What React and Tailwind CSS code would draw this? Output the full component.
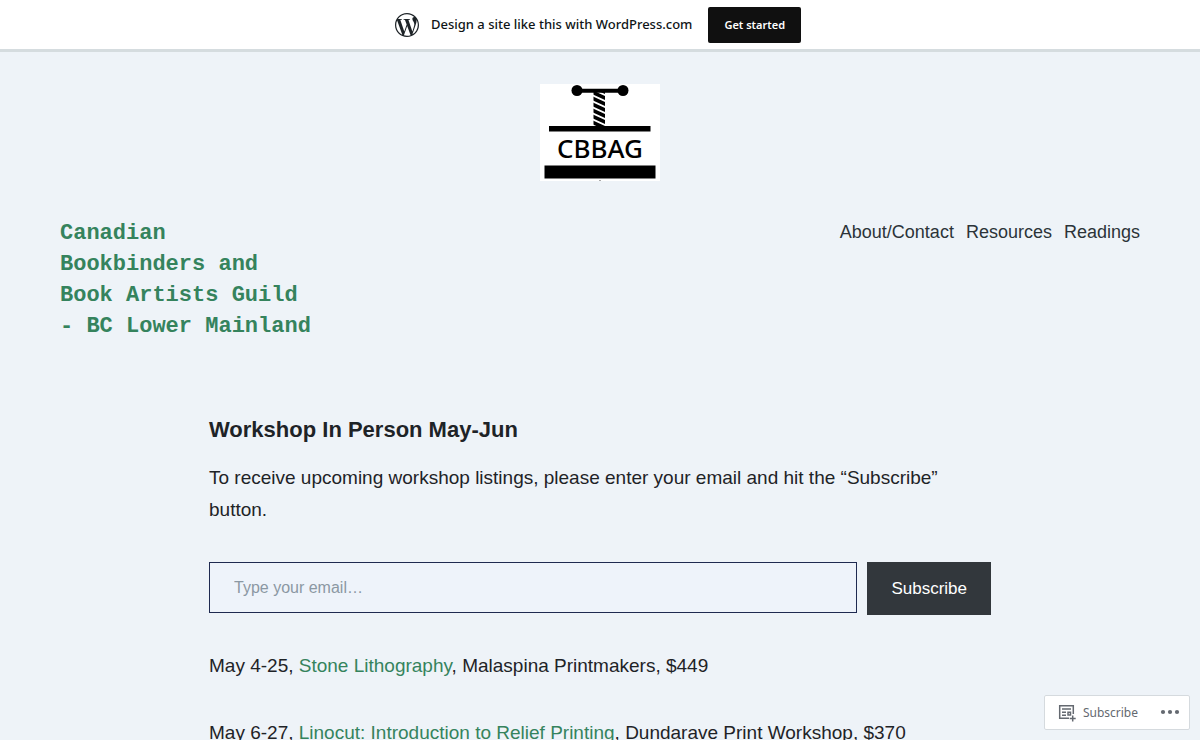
import { SiWordpress } from "react-icons/si";

const workshops = [
    { date: "May 4-25", title: "Stone Lithography", place: "Malaspina Printmakers", price: "$449" },
    { date: "May 6-27", title: "Linocut: Introduction to Relief Printing", place: "Dundarave Print Workshop", price: "$370" },
];

export default function App() {
    return (
        <div className="min-h-screen bg-[#eef3f8] text-[#1e2327] font-['Liberation_Sans',sans-serif]">
            <Banner />
            <Header />
            <main className="mx-auto w-full max-w-[782px] pt-[72px] pb-20">
                <h1 className="text-[22px] leading-8 font-bold">Workshop In Person May-Jun</h1>
                <p className="mt-4 text-[19px] leading-8">
                    To receive upcoming workshop listings, please enter your email and hit the “Subscribe” button.
                </p>
                <SubscribeForm />
                <div className="mt-[35px] flex flex-col gap-[35px]">
                    {workshops.map(w => <Workshop key={w.title} {...w} />)}
                </div>
            </main>
            <ActionBar />
        </div>
    );
}

function Banner() {
    return (
        <div className="flex h-[52px] items-center justify-center border-b-3 border-[#d5dcdf] bg-white pt-px pr-1 font-['Noto_Sans',sans-serif]">
            <SiWordpress className="size-6 text-[#1d2327]" />
            <p className="ml-3 text-[13px] font-medium text-[#101517]">Design a site like this with WordPress.com</p>
            <a href="#start" className="ml-4 flex h-9 items-center rounded-xs bg-[#101010] px-4 text-[11px] font-semibold text-white">Get started</a>
        </div>
    );
}

function Header() {
    return (
        <header className="px-[60px] pt-8">
            <Logo />
            <div className="mt-[37px] flex items-start justify-between">
                <a href="#home" className="w-64 font-['Liberation_Mono',monospace] text-[22px] leading-[31px] font-bold text-[#35835d]">
                    Canadian Bookbinders and Book Artists Guild - BC Lower Mainland
                </a>
                <nav className="flex gap-3 text-[18px] leading-[29px] text-[#2c3338]">
                    <a href="#about">About/Contact</a>
                    <a href="#resources">Resources</a>
                    <a href="#readings">Readings</a>
                </nav>
            </div>
        </header>
    );
}

// book press: handle, threaded screw, platen and base
function Logo() {
    return (
        <svg className="mx-auto block h-[97px] w-[120px] bg-white" viewBox="0 0 120 97" role="img" aria-label="CBBAG">
            <circle cx="37" cy="6.5" r="5.5" />
            <circle cx="83" cy="6.5" r="5.5" />
            <path d="M37 4.7h46v4H37z" />
            <clipPath id="screw">
                <path d="M53.5 8h11.5v35H53.5z" />
            </clipPath>
            <g clipPath="url(#screw)" stroke="#000" strokeWidth="3.6">
                {[2, 8, 14, 20, 26, 32, 38, 44].map(y => <path key={y} d={`M52 ${y}l15 7`} />)}
            </g>
            <path d="M9 42h101.500v5.500H9z" />
            <text x="60" y="74" textAnchor="middle" fontSize="26" className="font-['Noto_Sans',sans-serif] font-medium">CBBAG</text>
            <path d="M4.500 81.500h111v13H4.500z" />
            <path d="M59 96h2v1h-2z" fill="#aaa" />
        </svg>
    );
}

function SubscribeForm() {
    return (
        <form className="mt-9 flex items-start gap-[10px]" onSubmit={e => e.preventDefault()}>
            <input
                type="email"
                aria-label="Type your email…"
                placeholder="Type your email…"
                className="h-[51px] min-w-0 flex-1 border border-[#1f2a50] bg-[#eef3fa] px-6 text-[16px] placeholder:text-[#8b98a3]"
            />
            <button type="submit" className="h-[53px] bg-[#32373c] px-6 text-[17px] text-white">Subscribe</button>
        </form>
    );
}

function Workshop({ date, title, place, price }) {
    return (
        <p className="text-[19px] leading-8">
            {date}, <a href="#workshop" className="text-[#35835d]">{title}</a>, {place}, {price}
        </p>
    );
}

function ActionBar() {
    return (
        <div className="fixed right-[10px] bottom-[10px] flex h-[35px] items-center rounded-xs border border-[#d5dade] bg-white pr-[9px] pl-[13px] font-['Noto_Sans',sans-serif] text-[#646970]">
            <button type="button" className="flex items-center gap-[7px] text-[12px]">
                <svg className="size-[18px]" viewBox="0 0 18 18" fill="none" stroke="currentColor" strokeWidth="1.500">
                    <path d="M11 14.300H1.700V1.700h13.600V10" />
                    <path d="M4 5h9M4 8.300h4M4 11.300h4" />
                    <path d="M10 8.300h2.500v2.700H10z" />
                    <path d="M14.700 11.500v6M11.700 14.500h6" />
                </svg>
                Subscribe
            </button>
            <button type="button" aria-label="More" className="ml-[22px]">
                <svg className="h-5 w-[20px]" viewBox="0 0 20 20" fill="currentColor">
                    <circle cx="3" cy="9" r="2.100" />
                    <circle cx="10" cy="9" r="2.100" />
                    <circle cx="17" cy="9" r="2.100" />
                </svg>
            </button>
        </div>
    );
}
